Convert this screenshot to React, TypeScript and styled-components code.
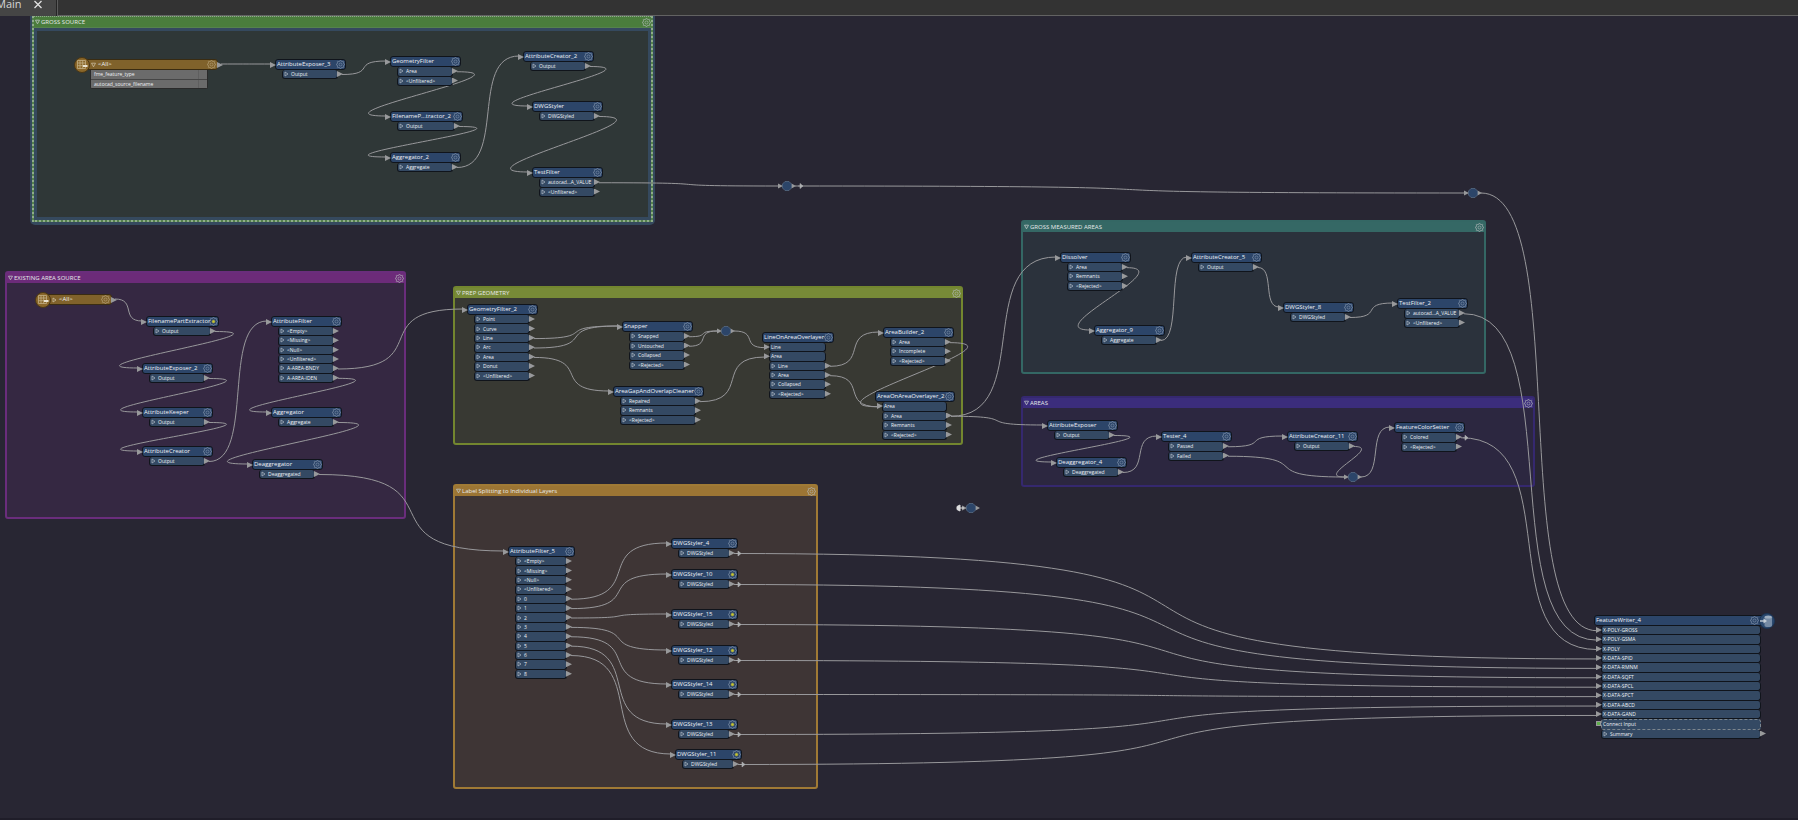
import React from "react";
import styled, { createGlobalStyle, css } from "styled-components";

/* ---------- scene metrics ---------- */

const SCENE_TOP = 16; // scene y shown at the top edge of the canvas
const NODE_INSET = 1; // space kept above every node header
const HEAD = 11;
const PORT_PITCH = 9.4;
const portsHeight = (n: number) => Math.round(n * PORT_PITCH);

/* ---------- data ---------- */

type Port = { label: string; kind?: "in" | "connect" };
type NodeData = {
  id: string;
  title: string;
  x: number;
  y: number;
  w?: number;
  ports: Port[];
  edited?: boolean;
  writer?: boolean;
};

const outs = (...labels: string[]): Port[] => labels.map((label) => ({ label }));
const ins = (...labels: string[]): Port[] => labels.map((label) => ({ label, kind: "in" as const }));

const NODES: NodeData[] = [
  { id: "ae2", title: "AttributeExposer_3", x: 275, y: 58, ports: outs("Output") },
  { id: "gf", title: "GeometryFilter", x: 390, y: 55, ports: outs("Area", "<Unfiltered>") },
  { id: "fp2", title: "FilenameP...tractor_2", x: 390, y: 110, w: 73, ports: outs("Output") },
  { id: "ag2", title: "Aggregator_2", x: 390, y: 151, ports: outs("Aggregate") },
  { id: "ac2", title: "AttributeCreator_2", x: 523, y: 50, ports: outs("Output") },
  { id: "ds", title: "DWGStyler", x: 532, y: 100, ports: outs("DWGStyled") },
  { id: "tf", title: "TestFilter", x: 532, y: 166, ports: outs("autocad...A_VALUE", "<Unfiltered>") },

  { id: "fpe", title: "FilenamePartExtractor", x: 146, y: 315, w: 73, edited: true, ports: outs("Output") },
  { id: "ae2b", title: "AttributeExposer_2", x: 142, y: 362, ports: outs("Output") },
  { id: "ak", title: "AttributeKeeper", x: 142, y: 406, ports: outs("Output") },
  { id: "ac", title: "AttributeCreator", x: 142, y: 445, ports: outs("Output") },
  {
    id: "af", title: "AttributeFilter", x: 271, y: 315,
    ports: outs("<Empty>", "<Missing>", "<Null>", "<Unfiltered>", "A-AREA-BNDY", "A-AREA-IDEN"),
  },
  { id: "ag", title: "Aggregator", x: 271, y: 406, ports: outs("Aggregate") },
  { id: "de", title: "Deaggregator", x: 252, y: 458, ports: outs("Deaggregated") },

  {
    id: "gf2", title: "GeometryFilter_2", x: 467, y: 303,
    ports: outs("Point", "Curve", "Line", "Arc", "Area", "Donut", "<Unfiltered>"),
  },
  { id: "sn", title: "Snapper", x: 622, y: 320, ports: outs("Snapped", "Untouched", "Collapsed", "<Rejected>") },
  { id: "gap", title: "AreaGapAndOverlapCleaner", x: 613, y: 385, w: 91, ports: outs("Repaired", "Remnants", "<Rejected>") },
  {
    id: "loa", title: "LineOnAreaOverlayer", x: 762, y: 331, w: 72,
    ports: [...ins("Line", "Area"), ...outs("Line", "Area", "Collapsed", "<Rejected>")],
  },
  { id: "ab2", title: "AreaBuilder_2", x: 883, y: 326, ports: outs("Area", "Incomplete", "<Rejected>") },
  {
    id: "aoa", title: "AreaOnAreaOverlayer_2", x: 875, y: 390, w: 80,
    ports: [...ins("Area"), ...outs("Area", "Remnants", "<Rejected>")],
  },

  { id: "dis", title: "Dissolver", x: 1060, y: 251, ports: outs("Area", "Remnants", "<Rejected>") },
  { id: "ag9", title: "Aggregator_9", x: 1094, y: 324, ports: outs("Aggregate") },
  { id: "ac5", title: "AttributeCreator_5", x: 1191, y: 251, ports: outs("Output") },
  { id: "ds8", title: "DWGStyler_8", x: 1283, y: 301, ports: outs("DWGStyled") },
  { id: "tf2", title: "TestFilter_2", x: 1397, y: 297, ports: outs("autocad...A_VALUE", "<Unfiltered>") },

  { id: "ae", title: "AttributeExposer", x: 1047, y: 419, ports: outs("Output") },
  { id: "de4", title: "Deaggregator_4", x: 1056, y: 456, ports: outs("Deaggregated") },
  { id: "te4", title: "Tester_4", x: 1161, y: 430, ports: outs("Passed", "Failed") },
  { id: "ac11", title: "AttributeCreator_11", x: 1287, y: 430, ports: outs("Output") },
  { id: "fcs", title: "FeatureColorSetter", x: 1394, y: 421, ports: outs("Colored", "<Rejected>") },

  {
    id: "af5", title: "AttributeFilter_5", x: 508, y: 545, w: 67,
    ports: outs("<Empty>", "<Missing>", "<Null>", "<Unfiltered>", "0", "1", "2", "3", "4", "5", "6", "7", "8"),
  },
  { id: "ds4", title: "DWGStyler_4", x: 671, y: 537, w: 67, ports: outs("DWGStyled") },
  { id: "ds10", title: "DWGStyler_10", x: 671, y: 568, w: 67, edited: true, ports: outs("DWGStyled") },
  { id: "ds15", title: "DWGStyler_15", x: 671, y: 608, w: 67, edited: true, ports: outs("DWGStyled") },
  { id: "ds12", title: "DWGStyler_12", x: 671, y: 644, w: 67, edited: true, ports: outs("DWGStyled") },
  { id: "ds14", title: "DWGStyler_14", x: 671, y: 678, w: 67, edited: true, ports: outs("DWGStyled") },
  { id: "ds13", title: "DWGStyler_13", x: 671, y: 718, w: 67, edited: true, ports: outs("DWGStyled") },
  { id: "ds11", title: "DWGStyler_11", x: 675, y: 748, w: 67, edited: true, ports: outs("DWGStyled") },

  {
    id: "fw", title: "FeatureWriter_4", x: 1594, y: 614, w: 175, writer: true,
    ports: [
      ...ins(
        "X-POLY-GROSS", "X-POLY-GSMA", "X-POLY", "X-DATA-SPID", "X-DATA-RMNM",
        "X-DATA-SQFT", "X-DATA-SPCL", "X-DATA-SPCT", "X-DATA-ABCD", "X-DATA-GAND",
      ),
      { label: "Connect Input", kind: "connect" },
      { label: "Summary" },
    ],
  },
];

type GroupData = {
  title: string; x: number; y: number; w: number; h: number;
  line: string; head: string; fill: string; selected?: boolean;
};

const GROUPS: GroupData[] = [
  { title: "GROSS SOURCE", x: 30, y: 16, w: 625, h: 209, line: "#35495e", head: "#4a7d3c", fill: "#2f3737", selected: true },
  { title: "EXISTING AREA SOURCE", x: 5, y: 271, w: 401, h: 248, line: "#6a2d7c", head: "#6c2b79", fill: "#352842" },
  { title: "PREP GEOMETRY", x: 453, y: 286, w: 510, h: 159, line: "#73862f", head: "#778a37", fill: "#383933" },
  { title: "GROSS MEASURED AREAS", x: 1021, y: 220, w: 465, h: 154, line: "#346764", head: "#356865", fill: "#2b323c" },
  { title: "AREAS", x: 1021, y: 396, w: 514, h: 91, line: "#35286f", head: "#3b2d7c", fill: "#2c2740" },
  { title: "Label Splitting to Individual Layers", x: 453, y: 484, w: 365, h: 305, line: "#a07a35", head: "#9c7534", fill: "#3e3535" },
];

type Pt = [number, number];
const byId = (id: string) => NODES.find((n) => n.id === id)!;
const width = (n: NodeData) => n.w ?? 71;
const portY = (n: NodeData, i: number) =>
  n.y + NODE_INSET + HEAD + ((i + 0.5) * portsHeight(n.ports.length)) / n.ports.length;
const out = (id: string, i = 0): Pt => {
  const n = byId(id);
  return [n.x + width(n) - 4, portY(n, i)];
};
const into = (id: string, i?: number): Pt => {
  const n = byId(id);
  return i === undefined ? [n.x - 4, n.y + NODE_INSET + 5] : [n.x + 3, portY(n, i)];
};

const JUNCTIONS: Pt[] = [[787, 186], [1473, 193], [726, 331], [1353, 477], [971, 508]];
const jIn = (i: number): Pt => [JUNCTIONS[i][0] - 9, JUNCTIONS[i][1]];
const jOut = (i: number): Pt => [JUNCTIONS[i][0] + 8, JUNCTIONS[i][1]];

const WIRES: [Pt, Pt][] = [
  [[221, 64], into("ae2")],
  [out("ae2"), into("gf")],
  [out("gf"), into("fp2")],
  [out("fp2"), into("ag2")],
  [out("ag2"), into("ac2")],
  [out("ac2"), into("ds")],
  [out("ds"), into("tf")],
  [out("tf"), jIn(0)],
  [jOut(0), jIn(1)],
  [jOut(1), into("fw", 0)],
  [[115, 299], into("fpe")],
  [out("fpe"), into("ae2b")],
  [out("ae2b"), into("ak")],
  [out("ak"), into("ac")],
  [out("ac"), into("af")],
  [out("af", 4), into("gf2")],
  [out("af", 5), into("ag")],
  [out("ag"), into("de")],
  [out("de"), into("af5")],
  [out("gf2", 2), into("sn")],
  [out("gf2", 3), into("sn")],
  [out("gf2", 4), into("gap")],
  [out("sn", 0), jIn(2)],
  [out("sn", 1), jIn(2)],
  [jOut(2), into("loa", 0)],
  [out("gap"), into("loa", 1)],
  [out("loa", 2), into("ab2")],
  [out("loa", 3), into("aoa", 0)],
  [out("ab2"), into("aoa", 0)],
  [out("aoa", 1), into("dis")],
  [out("aoa", 1), into("ae")],
  [out("dis"), into("ag9")],
  [out("ag9"), into("ac5")],
  [out("ac5"), into("ds8")],
  [out("ds8"), into("tf2")],
  [out("tf2"), into("fw", 1)],
  [out("ae"), into("de4")],
  [out("de4"), into("te4")],
  [out("te4", 0), into("ac11")],
  [out("te4", 1), jIn(3)],
  [out("ac11"), jIn(3)],
  [jOut(3), into("fcs")],
  [out("fcs"), into("fw", 2)],
  [out("af5", 4), into("ds4")],
  [out("af5", 5), into("ds10")],
  [out("af5", 6), into("ds15")],
  [out("af5", 7), into("ds12")],
  [out("af5", 8), into("ds14")],
  [out("af5", 9), into("ds13")],
  [out("af5", 10), into("ds11")],
  [out("ds4"), into("fw", 3)],
  [out("ds10"), into("fw", 4)],
  [out("ds15"), into("fw", 5)],
  [out("ds12"), into("fw", 6)],
  [out("ds14"), into("fw", 7)],
  [out("ds13"), into("fw", 8)],
  [out("ds11"), into("fw", 9)],
];

const MARKS: Pt[] = [
  ...["ds4", "ds10", "ds15", "ds12", "ds14", "ds13", "ds11", "fcs"].map(
    (id): Pt => [out(id)[0] + 5, out(id)[1]],
  ),
  [801, 186],
];

function wirePath([[x1, y1], [x2, y2]]: [Pt, Pt]) {
  const dx = x2 - x1;
  const reach = dx >= 0 ? dx * 0.8 : 21 - dx * 0.85;
  return `M${x1} ${y1}C${x1 + reach} ${y1} ${x2 - reach} ${y2} ${x2} ${y2}`;
}

/* ---------- styles ---------- */

const GlobalStyle = createGlobalStyle`
  * { box-sizing: border-box; }
  body {
    margin: 0;
    background: #282633;
    font-family: "Open Sans", "Noto Sans", sans-serif;
  }
  button {
    margin: 0;
    padding: 0;
    border: 0;
    background: none;
    color: inherit;
    font: inherit;
    line-height: 0;
  }
`;

const Page = styled.div`
  display: flex;
  flex-direction: column;
  min-height: 100vh;
`;

const TabBar = styled.nav`
  display: flex;
  height: 16px;
  overflow: hidden;
  background: #333333;
`;

const Tab = styled.div`
  display: flex;
  align-items: flex-start;
  gap: 12px;
  width: 57px;
  background: #454545;
  border-right: 1px solid #252525;
  color: #d6d6d6;
`;

const TabName = styled.button`
  margin-left: -4px;
  font-size: 11px;
  line-height: 8px;
`;

const TabRest = styled.div`
  flex: 1;
  border-left: 1px solid #5c5c5c;
  border-bottom: 1px solid #626262;
`;

const Canvas = styled.main`
  position: relative;
  flex: 1;
  overflow: hidden;
  border-bottom: 2px solid #1f1d29;
`;

const Wires = styled.svg`
  position: absolute;
  inset: 0;
  width: 100%;
  height: 100%;
`;

const place = css<{ $x: number; $y: number; $w: number }>`
  position: absolute;
  left: ${(p) => p.$x}px;
  top: ${(p) => p.$y - SCENE_TOP}px;
  width: ${(p) => p.$w}px;
`;

const Group = styled.section<{ $x: number; $y: number; $w: number; $h: number; $line: string; $fill: string; $selected?: boolean }>`
  ${place}
  display: flex;
  flex-direction: column;
  height: ${(p) => p.$h}px;
  border-radius: 3px;
  border: 2px solid ${(p) => p.$line};
  background: ${(p) => p.$fill};
  ${(p) =>
    p.$selected &&
    css`
      border-width: 0 2px 3px;
      border-radius: 0 0 5px 5px;
    `}
`;

const SelectedFrame = styled.div`
  display: flex;
  flex: 1;
  flex-direction: column;
  border: 2px dotted #8fac8a;
  border-top-width: 1px;
  background: #55824d;
`;

const SelectedBody = styled.div`
  flex: 1;
  margin-top: 1px;
  border: 3px solid #35495e;
  background: #2f3737;
`;

const GroupHead = styled.header<{ $fill: string }>`
  display: flex;
  align-items: center;
  gap: 1px;
  height: 10px;
  padding-left: 1px;
  background: ${(p) => p.$fill};
  color: #e6e9e9;
`;

const GroupTitle = styled.h2`
  flex: 1;
  margin: 0;
  font-size: 6px;
  font-weight: 400;
  line-height: 8px;
  white-space: nowrap;
`;

const NodeBox = styled.article<{ $x: number; $y: number; $w: number }>`
  ${place}
  padding-top: ${NODE_INSET}px;
  color: #eef1f5;
`;

const NodeHead = styled.header<{ $amber?: boolean }>`
  position: relative;
  display: flex;
  align-items: center;
  justify-content: space-between;
  height: 11px;
  padding: 0 0 0 1px;
  border: 1px solid #10141b;
  border-radius: 3px;
  background: ${(p) => (p.$amber ? "#80622b" : "#2c4569")};
`;

const NodeTitle = styled.h3`
  flex: 1;
  min-width: 0;
  margin: 0;
  font-size: 6px;
  font-weight: 400;
  line-height: 9px;
  white-space: nowrap;
`;

const Ports = styled.ul<{ $h: number }>`
  display: flex;
  flex-direction: column;
  height: ${(p) => p.$h}px;
  margin: 0 8px 0 7px;
  padding: 0;
  list-style: none;
`;

const PortRow = styled.li<{ $dashed?: boolean }>`
  position: relative;
  display: flex;
  flex: 1;
  align-items: center;
  gap: 2px;
  min-height: 0;
  padding-left: 1px;
  border: 1px solid #10141b;
  border-top-width: 0;
  border-radius: 3px;
  background: #344963;
  font-size: 5px;
  line-height: 8px;
  white-space: nowrap;
  ${(p) =>
    p.$dashed &&
    css`
      border: 1px dashed #7d868e;
    `}
`;

const Arrow = styled.span<{ $side: "left" | "right" }>`
  position: absolute;
  top: 1px;
  ${(p) => (p.$side === "left" ? "left: -6px;" : "right: -6px;")}
  width: 6px;
  height: 6px;
  background: #98999b;
  clip-path: polygon(0 0, 100% 50%, 0 100%);
`;

const HeadArrow = styled(Arrow)`
  top: 2px;
`;

const Plug = styled.span`
  position: absolute;
  top: 1px;
  left: -6px;
  width: 5px;
  height: 5px;
  border: 1px solid #98999b;
  background: #5fae4c;
`;

const Badge = styled.span<{ $amber?: boolean; $end?: boolean }>`
  position: absolute;
  top: -3px;
  ${(p) => (p.$end ? "right: -7px;" : "left: -9px;")}
  display: flex;
  align-items: center;
  justify-content: center;
  width: 16px;
  height: 16px;
  border: 1px solid ${(p) => (p.$amber ? "#4a3715" : "#1c3453")};
  border-radius: 50%;
  background: ${(p) => (p.$amber ? "#8a672a" : "#2c4a70")};
`;

const WriterGap = styled.span`
  width: 9px;
`;

const ReaderHead = styled(NodeHead)`
  justify-content: flex-start;
  gap: 2px;
  padding: 0 1px 0 8px;
  border-color: #3a2c12;
`;

const AttributeList = styled.ul`
  margin: 0 10px 0 8px;
  padding: 0;
  list-style: none;
  border: 1px solid #2a2a2a;
  border-top: 0;
  border-radius: 0 0 2px 2px;
  background: #6b6b6b;
`;

const AttributeRow = styled.li`
  height: 9px;
  padding-left: 3px;
  background: linear-gradient(90deg, transparent calc(100% - 9px), #5f5f5f 0, #5f5f5f calc(100% - 8px), transparent 0);
  font-size: 5px;
  line-height: 8px;
  & + & {
    border-top: 1px solid #454545;
  }
`;

/* ---------- icons ---------- */

const GEAR = (() => {
  const pts: string[] = [];
  for (let i = 0; i < 32; i++) {
    const r = i % 4 < 2 ? 4.3 : 3.1;
    const a = ((i - 0.5) * Math.PI) / 16;
    pts.push(`${(4.5 + r * Math.cos(a)).toFixed(2)} ${(4.5 + r * Math.sin(a)).toFixed(2)}`);
  }
  return `M${pts.join("L")}Z`;
})();

const GearButton = ({ label, tint = "#8496ad", edited }: { label: string; tint?: string; edited?: boolean }) => (
  <button type="button" aria-label={`${label} properties`}>
    <svg width="9" height="9" viewBox="0 0 9 9" fill="none" stroke={tint} strokeWidth="0.6">
      <path d={GEAR} />
      <circle cx="4.5" cy="4.5" r="1.5" fill={edited ? "#c9c62c" : "none"} stroke={edited ? "#8f9450" : tint} />
    </svg>
  </button>
);

const Twisty = ({ open, tint = "#a5b0bc" }: { open?: boolean; tint?: string }) => (
  <svg width="5" height="6" viewBox="0 0 5 6" fill="none" stroke={tint} strokeWidth="0.8">
    <path d={open ? "M.5 1.2h4L2.5 4.8z" : "M1 1v4L4 3z"} />
  </svg>
);

const TableIcon = () => (
  <svg width="12" height="12" viewBox="0 0 12 12" fill="none" stroke="#c9b88f">
    <path d="M1.5 1.5h8v8h-8zM1.5 4h8M1.5 6.7h8M4 1.5v8M6.7 1.5v8" strokeWidth="0.7" />
    <path d="M7 7h4.5" stroke="#e8e1cf" strokeWidth="2" />
  </svg>
);

const DatabaseIcon = () => (
  <svg width="14" height="14" viewBox="0 0 14 14">
    <path d="M4.500 3v8.500c0 1 1.800 1.500 3.700 1.500s3.800-.5 3.800-1.500V3z" fill="#768ba5" />
    <ellipse cx="8.200" cy="3" rx="3.700" ry="1.600" fill="#9eadbf" />
    <path d="M0 7h4" stroke="#c5cdd6" strokeWidth="1.400" />
    <path d="M3.500 4.500 7 7 3.500 9.500z" fill="#c5cdd6" />
  </svg>
);

/* ---------- parts ---------- */

function GroupBox({ g }: { g: GroupData }) {
  const head = (
    <GroupHead $fill={g.head}>
      <Twisty open tint="#c0c6c6" />
      <GroupTitle>{g.title}</GroupTitle>
      <GearButton label={g.title} tint="#b3b8bb" />
    </GroupHead>
  );
  return (
    <Group $x={g.x} $y={g.y} $w={g.w} $h={g.h} $line={g.line} $fill={g.fill} $selected={g.selected}>
      {g.selected ? (
        <SelectedFrame>
          {head}
          <SelectedBody />
        </SelectedFrame>
      ) : (
        head
      )}
    </Group>
  );
}

function PortItem({ port }: { port: Port }) {
  if (port.kind === "connect")
    return (
      <PortRow $dashed>
        <Plug />
        {port.label}
      </PortRow>
    );
  if (port.kind === "in")
    return (
      <PortRow>
        <Arrow $side="left" />
        {port.label}
      </PortRow>
    );
  return (
    <PortRow>
      <Twisty />
      {port.label}
      <Arrow $side="right" />
    </PortRow>
  );
}

function TransformerNode({ n }: { n: NodeData }) {
  return (
    <NodeBox $x={n.x} $y={n.y} $w={width(n)}>
      <NodeHead>
        {!n.writer && !n.ports.some((p) => p.kind) && <HeadArrow $side="left" />}
        <NodeTitle>{n.title}</NodeTitle>
        <GearButton label={n.title} edited={n.edited} />
        {n.writer && (
          <>
            <WriterGap />
            <Badge $end>
              <DatabaseIcon />
            </Badge>
          </>
        )}
      </NodeHead>
      <Ports $h={portsHeight(n.ports.length)}>
        {n.ports.map((p, i) => (
          <PortItem key={i} port={p} />
        ))}
      </Ports>
    </NodeBox>
  );
}

function ReaderNode({ x, y, w, open, attributes = [] }: { x: number; y: number; w: number; open?: boolean; attributes?: string[] }) {
  return (
    <NodeBox $x={x} $y={y} $w={w}>
      <ReaderHead $amber>
        <Badge $amber>
          <TableIcon />
        </Badge>
        <Twisty open={open} tint="#c9bda0" />
        <NodeTitle>&lt;All&gt;</NodeTitle>
        <GearButton label="Reader" tint="#b8a57c" />
        <HeadArrow $side="right" />
      </ReaderHead>
      {attributes.length > 0 && (
        <AttributeList>
          {attributes.map((a) => (
            <AttributeRow key={a}>{a}</AttributeRow>
          ))}
        </AttributeList>
      )}
    </NodeBox>
  );
}

function WireLayer() {
  return (
    <Wires aria-hidden="true">
      <g transform={`translate(0 ${-SCENE_TOP})`}>
        <g fill="none" stroke="#98989b" strokeWidth="1">
          {WIRES.map((w, i) => (
            <path key={i} d={wirePath(w)} />
          ))}
        </g>
        {JUNCTIONS.map(([x, y]) => (
          <g key={`${x}-${y}`} transform={`translate(${x} ${y})`}>
            <path d="M-9-2.500 -4 0-9 2.500zM4.500-2.500 9 0 4.500 2.500z" fill="#98999b" />
            <path d="M-2-4.500h4L4.500-2v4L2 4.500h-4L-4.500 2v-4z" fill="#2c4569" stroke="#5b7088" strokeWidth="0.700" />
          </g>
        ))}
        {MARKS.map(([x, y], i) => (
          <path
            key={i}
            transform={`translate(${x} ${y})`}
            d="M-1-2.500 2 0-1 2.500zM-3 0h4"
            fill="#aeb0b2"
            stroke="#aeb0b2"
            strokeWidth="0.600"
          />
        ))}
        <path d="M960 505v6l-3-1.500v-3zM959 508h5" fill="#dddddf" stroke="#dddddf" />
      </g>
    </Wires>
  );
}

export default function App() {
  return (
    <Page>
      <GlobalStyle />
      <TabBar aria-label="Canvas tabs">
        <Tab>
          <TabName type="button">Main</TabName>
          <button type="button" aria-label="Close tab">
            <svg width="8" height="9" viewBox="0 0 8 9" stroke="#e2e2e2" strokeWidth="1.300" fill="none">
              <path d="M.5 1l7 7M7.500 1l-7 7" />
            </svg>
          </button>
        </Tab>
        <TabRest />
      </TabBar>
      <Canvas>
        {GROUPS.map((g) => (
          <GroupBox key={g.title} g={g} />
        ))}
        <WireLayer />
        <ReaderNode x={82} y={58} w={136} open attributes={["fme_feature_type", "autocad_source_filename"]} />
        <ReaderNode x={43} y={293} w={69} />
        {NODES.map((n) => (
          <TransformerNode key={n.id} n={n} />
        ))}
      </Canvas>
    </Page>
  );
}
